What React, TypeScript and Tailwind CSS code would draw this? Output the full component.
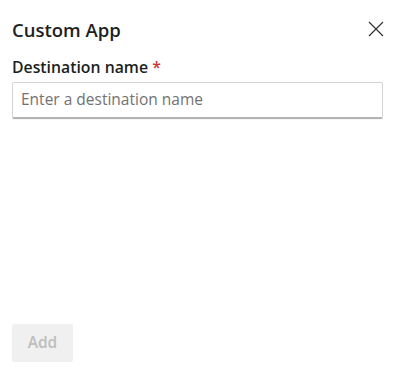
import React from "react";

export default function App() {
  return (
    <div
      className="w-[400px] h-[379px] bg-white flex flex-col px-3 pt-[15px] pb-[17px]"
      style={{ fontFamily: '"Open Sans", "Noto Sans", sans-serif' }}
    >
      <div className="flex items-center justify-between h-[30px]">
        <h1 className="text-[18.5px] font-semibold text-[#201f1e] leading-[30px]">Custom App</h1>
        <button className="w-[22px] h-[22px] flex items-center justify-center mr-[1px] -mt-[2px]" aria-label="Close">
          <svg width="16" height="16" viewBox="0 0 16 16" fill="none" stroke="#323130" strokeWidth="1.2">
            <path d="M1 1 L15 15 M15 1 L1 15" />
          </svg>
        </button>
      </div>
      <label className="mt-[10px] text-[15.8px] font-semibold text-[#201f1e] leading-[24px]">
        Destination name <span className="text-[#d13438]">*</span>
      </label>
      <div className="mt-[3px] h-[37px] w-[371px] border border-[#d4d4d4] border-b-2 border-b-[#b3b3b3] rounded-[2px] flex items-center px-2 shadow-[0_1px_1px_rgba(0,0,0,0.05)]">
        <input
          className="w-full outline-none text-[15.5px] text-[#201f1e] placeholder:text-[#727272] bg-transparent"
          placeholder="Enter a destination name"
          style={{ fontFamily: '"Open Sans", "Noto Sans", sans-serif' }}
        />
      </div>
      <div className="flex-1" />
      <div>
        <button className="w-[61px] h-[38px] bg-[#f0f0f0] rounded-[2px] text-[15.5px] font-semibold text-[#bdbdbd]">
          Add
        </button>
      </div>
    </div>
  );
}
